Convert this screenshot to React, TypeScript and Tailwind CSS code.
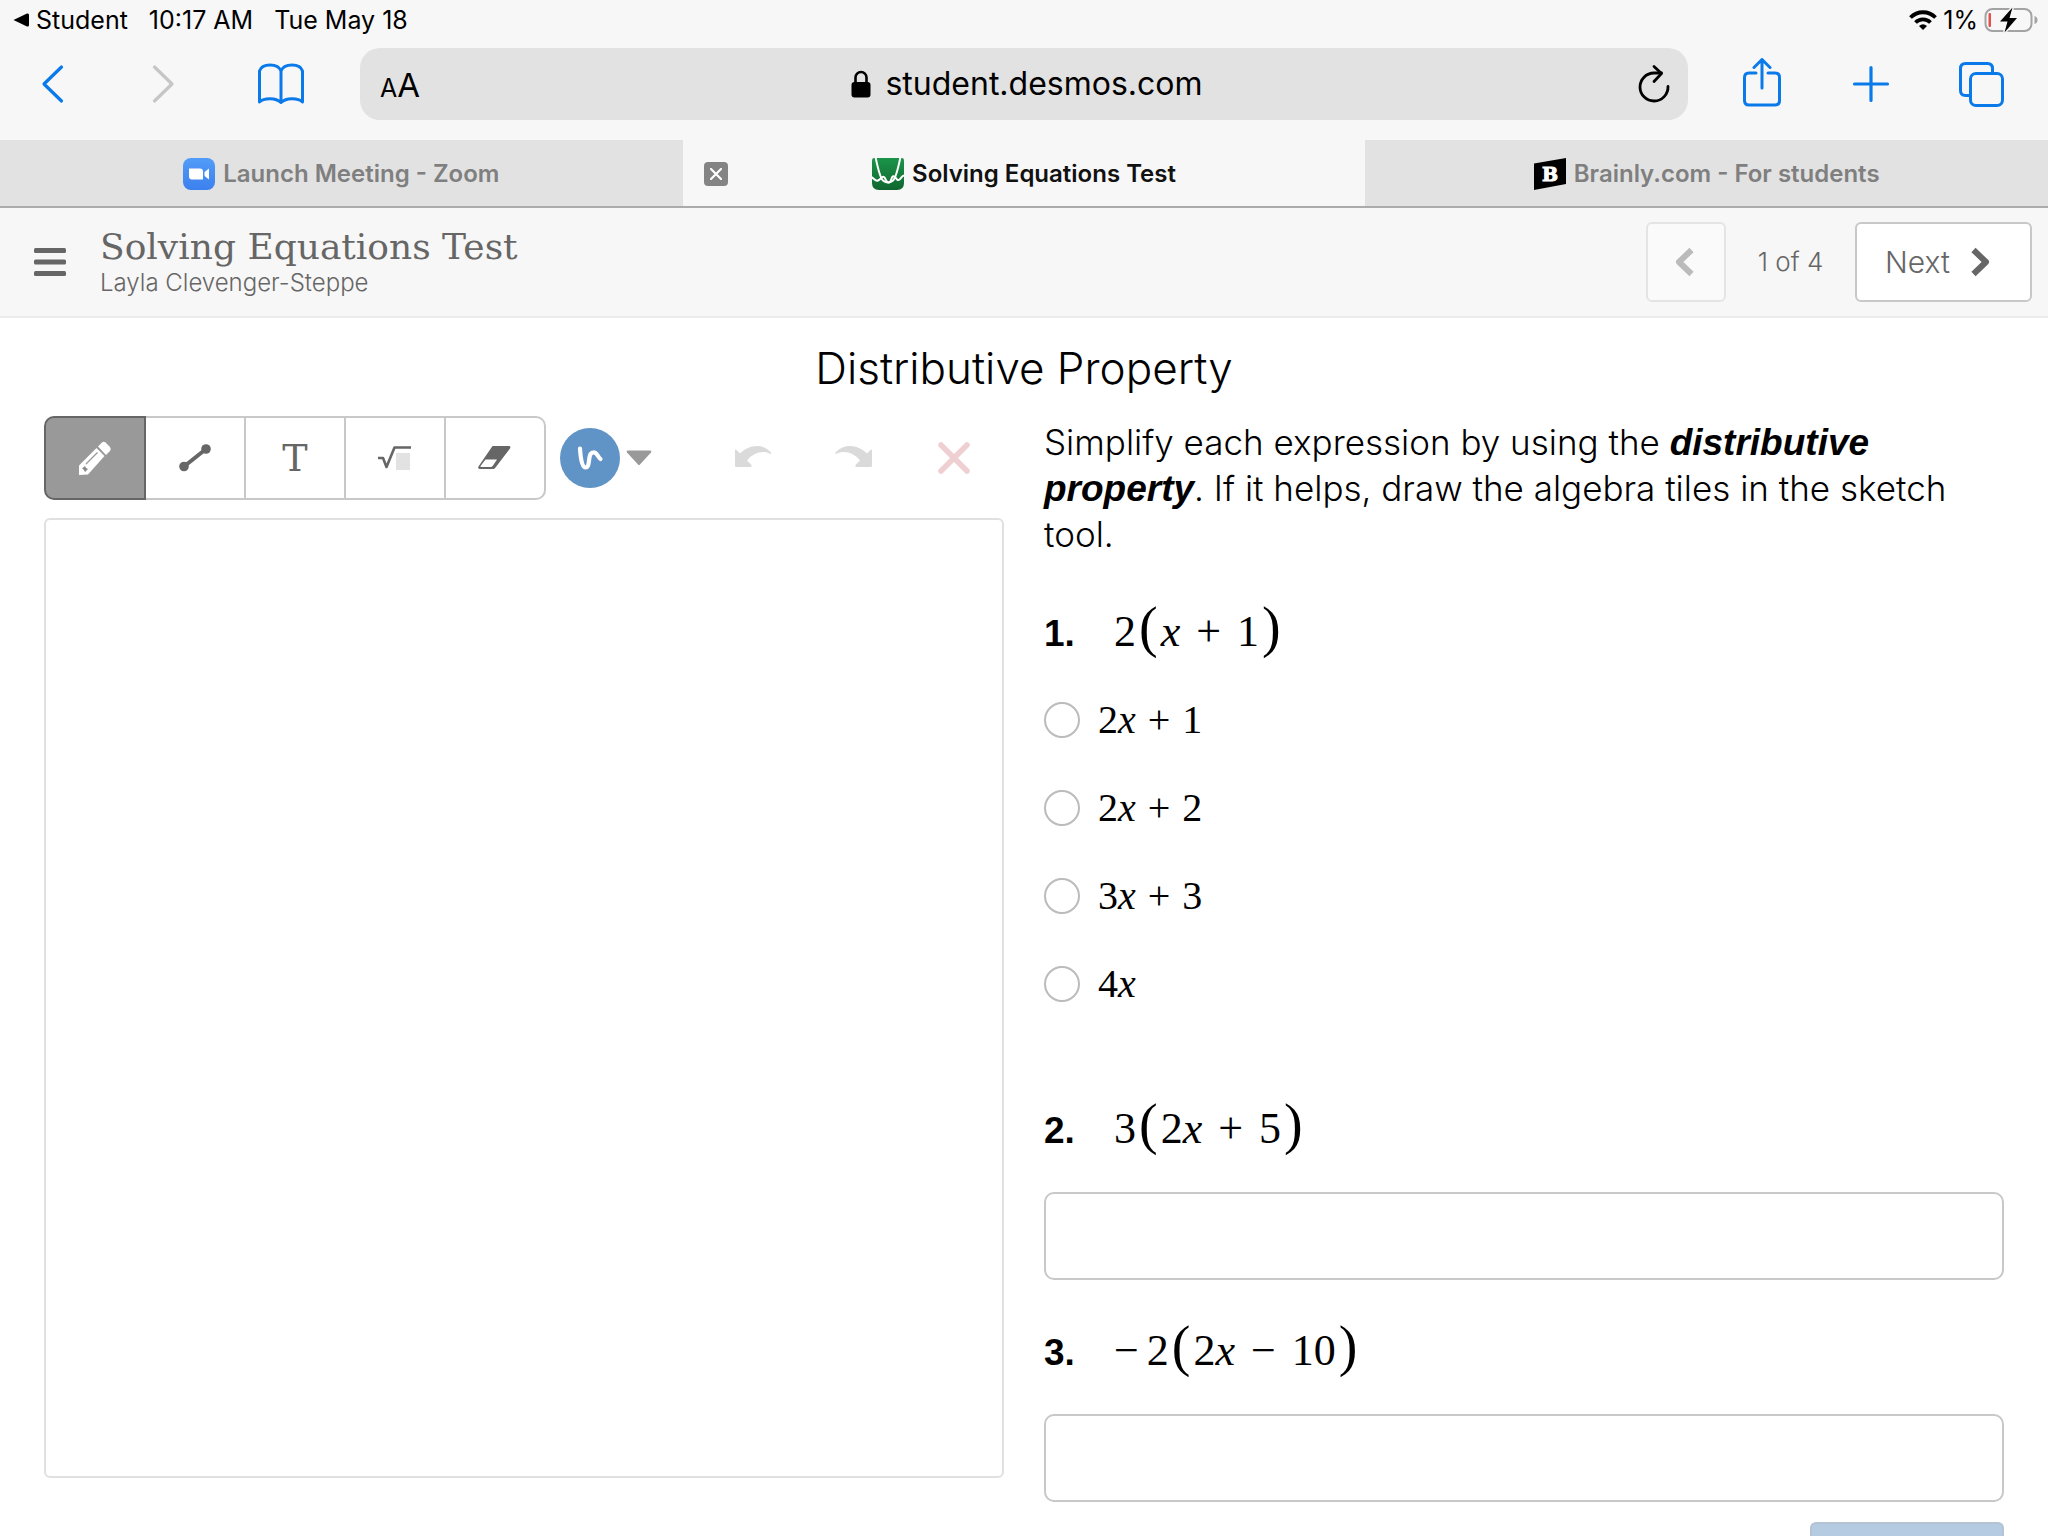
import { useState, type ReactNode } from 'react';

const TOOLS = ['Pencil', 'Line', 'Text', 'Math', 'Eraser'] as const;
type Tool = (typeof TOOLS)[number];

function ToolIcon({ tool }: { tool: Tool }) {
  switch (tool) {
    case 'Pencil':
      return (
        <svg width="40" height="40" viewBox="0 0 40 40" aria-hidden="true">
          <path d="M4 37V27.500L21.500 10L29.500 18L13 36.500Z" fill="currentColor" />
          <path d="M23 8.500L27 4.500Q28.500 3 30.500 4.500L35 9Q36.500 11 35 13L31 17Z" fill="currentColor" />
          <path d="M11 26L22.500 14.500" stroke="#999" strokeWidth="1.200" />
          <path d="M7 30.500L10 28L11 30L13 31L10 34Q9 31 7 30.500Z" fill="#8a8a8a" />
        </svg>
      );
    case 'Line':
      return (
        <svg width="40" height="40" viewBox="0 0 40 40" aria-hidden="true">
          <path d="M9 28.500L31 11" stroke="currentColor" strokeWidth="4" />
          <circle cx="9" cy="28.500" r="4.800" fill="currentColor" />
          <circle cx="31" cy="11" r="4.800" fill="currentColor" />
        </svg>
      );
    case 'Text':
      return <span className="font-['DejaVu_Serif','serif'] text-[38px] leading-10">T</span>;
    case 'Math':
      return (
        <svg width="40" height="40" viewBox="0 0 40 40" aria-hidden="true">
          <rect x="21" y="15" width="14" height="17" fill="#e2e2e2" />
          <path
            d="M3 20H8L11.500 29L19.500 9.500H36"
            fill="none"
            stroke="currentColor"
            strokeWidth="2.600"
            strokeLinejoin="round"
          />
        </svg>
      );
    case 'Eraser':
      return (
        <svg width="40" height="40" viewBox="0 0 40 40" aria-hidden="true">
          <path
            d="M17.500 8H34.500Q36 8.500 35 10.500L20.500 29.500Q19.500 31 18 31H4.500Q2.500 30.500 3.500 28.500Z"
            fill="currentColor"
          />
          <path d="M10.500 21.500H22L18 27.500Q17 29 15.500 29H6Q5 28.500 5.500 28Z" fill="#fff" />
        </svg>
      );
  }
}

function StatusBar() {
  return (
    <div className="flex h-10 items-center justify-between pl-3 pr-[10px] text-[25px] leading-10">
      <div className="flex items-center gap-[21px]">
        <a href="#student" className="flex items-center gap-1.5">
          <svg width="18" height="18" viewBox="0 0 18 18" aria-hidden="true">
            <path d="M1.500 9L15 2.500Q17 2 17 4V14Q17 16 15 15.500Z" />
          </svg>
          Student
        </a>
        <span>10:17 AM</span>
        <span>Tue May 18</span>
      </div>
      <div className="flex items-center gap-1.5">
        <svg width="28" height="22" viewBox="0 0 28 22" aria-hidden="true">
          <g fill="none" stroke="#000" strokeWidth="3.800">
            <path d="M1.500 8.500A17.500 17.500 0 0 1 26.500 8.500" />
            <path d="M6.500 13.500A10.500 10.500 0 0 1 21.500 13.500" />
          </g>
          <path d="M14 21L10 17Q14 13.500 18 17Z" />
        </svg>
        <span>1%</span>
        <svg width="54" height="26" viewBox="0 0 54 26" aria-hidden="true">
          <rect x="1.500" y="2" width="46" height="22" rx="7" fill="none" stroke="#a3a3a3" strokeWidth="2" />
          <path d="M50.500 9Q53.500 10 53.500 13Q53.500 16 50.500 17Z" fill="#a3a3a3" />
          <rect x="4.500" y="6" width="2.500" height="14" rx="1" fill="#e0524c" />
          <path
            d="M28.500 0.500L16 14.500H23.500L20.500 25.500L33 11H25.500Z"
            fill="#000"
            stroke="#f7f7f7"
            strokeWidth="3"
            paintOrder="stroke"
          />
        </svg>
      </div>
    </div>
  );
}

function BrowserBar() {
  return (
    <div className="flex h-[100px] items-start pt-2">
      <nav className="flex h-[72px] w-[360px] shrink-0 items-center text-[#0a7aea]">
        <button type="button" aria-label="Back" className="ml-10">
          <svg width="24" height="40" viewBox="0 0 24 40" fill="none" stroke="currentColor" strokeWidth="3.200">
            <path d="M21.500 3L4 20L21.500 37" strokeLinecap="round" strokeLinejoin="round" />
          </svg>
        </button>
        <button type="button" aria-label="Forward" className="ml-[88px] text-[#c6c6c8]">
          <svg width="24" height="40" viewBox="0 0 24 40" fill="none" stroke="currentColor" strokeWidth="3.200">
            <path d="M2.500 3L20 20L2.500 37" strokeLinecap="round" strokeLinejoin="round" />
          </svg>
        </button>
        <button type="button" aria-label="Bookmarks" className="ml-20">
          <svg width="50" height="44" viewBox="0 0 50 44" fill="none" stroke="currentColor" strokeWidth="3">
            <path
              d="M25 9C22 1 6 1 3.500 9V40C8 35.500 20 35.500 25 40.500C30 35.500 42 35.500 46.500 40V9C44 1 28 1 25 9V40"
              strokeLinejoin="round"
            />
          </svg>
        </button>
      </nav>

      <div className="flex h-[72px] min-w-0 flex-1 items-center justify-between rounded-[20px] bg-[#e2e2e2] pl-5 pr-[18px]">
        <button type="button" aria-label="Text size" className="flex w-9 items-baseline pt-1">
          <span className="text-[25px] leading-10">A</span>
          <span className="text-[33px] leading-10">A</span>
        </button>
        <div className="flex items-center gap-3.5 text-[32px] leading-10">
          <svg width="20" height="28" viewBox="0 0 20 28" aria-hidden="true">
            <rect x="0.500" y="12" width="19" height="15.500" rx="3" />
            <path d="M4.500 13V7.500A5.500 5.500 0 0 1 15.500 7.500V13" fill="none" stroke="#000" strokeWidth="2.600" />
          </svg>
          student.desmos.com
        </div>
        <button type="button" aria-label="Reload">
          <svg width="32" height="40" viewBox="0 0 32 40" fill="none" stroke="#000" strokeWidth="2.800">
            <path d="M30 22.500A14 14 0 1 1 16 9H23.500" strokeLinecap="round" />
            <path d="M16 2.500L23.500 9.500L16 17.500" strokeLinecap="round" strokeLinejoin="round" />
          </svg>
        </button>
      </div>

      <div className="flex h-[72px] w-[360px] shrink-0 items-center justify-end gap-[61px] pr-11 text-[#0a7aea]">
        <button type="button" aria-label="Share">
          <svg width="48" height="52" viewBox="0 2 48 52" fill="none" stroke="currentColor" strokeWidth="3">
            <path
              d="M18 17H11Q6.500 17 6.500 21.500V44.500Q6.500 49 11 49H37Q41.500 49 41.500 44.500V21.500Q41.500 17 37 17H30"
              strokeLinecap="round"
            />
            <path d="M24 32V3.500M16 11.500L24 3.500L32 11.500" strokeLinecap="round" strokeLinejoin="round" />
          </svg>
        </button>
        <button type="button" aria-label="New tab">
          <svg width="48" height="48" viewBox="0 0 48 48" stroke="currentColor" strokeWidth="3.200">
            <path d="M24 7.500V40.500M7.500 24H40.500" strokeLinecap="round" />
          </svg>
        </button>
        <button type="button" aria-label="Show tabs">
          <svg width="48" height="48" viewBox="0 0 48 48" fill="none" stroke="currentColor" strokeWidth="3">
            <rect x="14.500" y="13.500" width="32" height="32" rx="5.500" />
            <path d="M14 35.500H9.500Q4.500 35.500 4.500 30.500V8.500Q4.500 3.500 9.500 3.500H31.500Q36.500 3.500 36.500 8.500V13" />
          </svg>
        </button>
      </div>
    </div>
  );
}

function BrowserTab({ icon, title, active = false }: { icon: ReactNode; title: string; active?: boolean }) {
  return (
    <div
      className={
        active
          ? 'relative flex flex-1 items-center justify-center gap-2 bg-[#f7f7f7] pt-0.5 text-[#111]'
          : 'relative flex flex-1 items-center justify-center gap-2 bg-[#e2e2e2] pt-0.5 text-[#7f7f7f]'
      }
    >
      {active && (
        <button
          type="button"
          aria-label="Close tab"
          className="absolute left-[21px] flex h-6 w-6 items-center justify-center rounded bg-[#848484]"
        >
          <svg width="12" height="12" viewBox="0 0 12 12" stroke="#fff" strokeWidth="2.200">
            <path d="M1 1L11 11M11 1L1 11" strokeLinecap="round" />
          </svg>
        </button>
      )}
      {icon}
      <span className="text-[24px] font-semibold leading-8">{title}</span>
    </div>
  );
}

function TabStrip() {
  return (
    <div className="flex h-[68px] border-b-2 border-[#ababab]">
      <BrowserTab
        title="Launch Meeting - Zoom"
        icon={
          <svg width="32" height="32" viewBox="0 0 32 32" aria-hidden="true">
            <defs>
              <linearGradient id="zoom-bg" x1="0" y1="0" x2="0" y2="1">
                <stop offset="0" stopColor="#519cf8" />
                <stop offset="1" stopColor="#3c80ee" />
              </linearGradient>
            </defs>
            <rect width="32" height="32" rx="8" fill="url(#zoom-bg)" />
            <path d="M6 10.500H17Q20 10.500 20 13.500V21.500H9Q6 21.500 6 18.500Z" fill="#fff" />
            <path d="M21.500 14L26 10.500V21.500L21.500 18Z" fill="#fff" />
          </svg>
        }
      />
      <BrowserTab
        active
        title="Solving Equations Test"
        icon={
          <svg width="32" height="32" viewBox="0 0 32 32" aria-hidden="true">
            <defs>
              <linearGradient id="desmos-bg" x1="0" y1="0" x2="0" y2="1">
                <stop offset="0" stopColor="#1b9449" />
                <stop offset="1" stopColor="#10672f" />
              </linearGradient>
              <clipPath id="desmos-clip">
                <path d="M2 0H30Q32 0 32 3V25Q32 32 25 32H7Q0 32 0 25V3Q0 0 2 0Z" />
              </clipPath>
            </defs>
            <g clipPath="url(#desmos-clip)">
              <rect width="32" height="32" fill="url(#desmos-bg)" />
              <g fill="none" stroke="#fff" strokeWidth="2">
                <path d="M3.500 -1C6 11 8 20 11 22.500C14 25 18 25 21 22.500C24 20 26 11 28.500 -1" />
                <path d="M-1 19C2 20 3 23.500 6 22.500S10 17.500 12 19S14 25 17 24.500S19 17 22 18.500S25 23.500 27.500 21.500S30 17 33 17.500" />
              </g>
            </g>
          </svg>
        }
      />
      <BrowserTab
        title="Brainly.com - For students"
        icon={
          <svg width="32" height="32" viewBox="0 0 32 32" aria-hidden="true">
            <path d="M0 5.500L32 0V26L0 32Z" fill="#000" />
            <text
              x="16"
              y="23"
              textAnchor="middle"
              fill="#fff"
              stroke="#fff"
              strokeWidth="1"
              fontSize="19"
              fontWeight="700"
              fontFamily="DejaVu Serif, serif"
            >
              B
            </text>
          </svg>
        }
      />
    </div>
  );
}

function LessonHeader() {
  return (
    <header className="flex h-[110px] items-center border-b-2 border-[#ececec] bg-[#f7f7f7] pl-[34px] pr-4 font-light text-[#666]">
      <button type="button" aria-label="Menu" className="mr-[34px]">
        <svg width="32" height="28" viewBox="0 0 32 28" fill="currentColor">
          <rect width="32" height="5" rx="1.500" />
          <rect y="11.500" width="32" height="5" rx="1.500" />
          <rect y="23" width="32" height="5" rx="1.500" />
        </svg>
      </button>
      <div className="flex-1 pt-1.5">
        <h1 className="font-['DejaVu_Serif','serif'] text-[36px] leading-9">Solving Equations Test</h1>
        <p className="text-[24px] leading-9">Layla Clevenger-Steppe</p>
      </div>
      <button
        type="button"
        aria-label="Previous"
        disabled
        className="flex h-20 w-20 items-center justify-center rounded-md border-2 border-[#e4e4e4] bg-[#fafafa] text-[#bbb]"
      >
        <svg width="24" height="32" viewBox="0 0 24 32" fill="none" stroke="currentColor" strokeWidth="6">
          <path d="M17.500 4L5 16L17.500 28" strokeLinejoin="round" />
        </svg>
      </button>
      <span className="w-[129px] text-center text-[26px] leading-8">1 of 4</span>
      <button
        type="button"
        className="flex h-20 w-[177px] items-center gap-[18px] rounded-md border-2 border-[#c8c8c8] bg-white pl-7 text-[30px] leading-8"
      >
        Next
        <svg width="24" height="32" viewBox="0 0 24 32" fill="none" stroke="currentColor" strokeWidth="6" aria-hidden="true">
          <path d="M5.500 4L18 16L5.500 28" strokeLinejoin="round" />
        </svg>
      </button>
    </header>
  );
}

function SketchPad() {
  const [tool, setTool] = useState<Tool>('Pencil');

  return (
    <section aria-label="Sketch">
      <div className="flex h-[84px] items-center">
        <div className="flex h-[84px] rounded-[10px]">
          {TOOLS.map((name) => (
            <button
              key={name}
              type="button"
              aria-label={name}
              aria-pressed={tool === name}
              onClick={() => setTool(name)}
              className={
                tool === name
                  ? 'flex w-[102px] items-center justify-center border-2 border-[#666] bg-[#999] text-white first:rounded-l-[10px] last:rounded-r-[10px]'
                  : 'flex w-[100px] items-center justify-center border-y-2 border-r-2 border-[#c8c8c8] bg-white text-[#666] first:rounded-l-[10px] last:rounded-r-[10px]'
              }
            >
              <ToolIcon tool={name} />
            </button>
          ))}
        </div>
        <button type="button" aria-label="Stroke color" className="ml-3.5 flex items-center gap-1.5">
          <svg width="60" height="60" viewBox="0 0 60 60" aria-hidden="true">
            <circle cx="30" cy="30" r="30" fill="#6093c6" />
            <path
              d="M20 20.500C20.500 30 22 39.500 25.500 39.500C31 39.500 27 25 33 24.500C37 24 37.500 28.500 40.500 31"
              fill="none"
              stroke="#fff"
              strokeWidth="4.200"
              strokeLinecap="round"
            />
          </svg>
          <svg width="26" height="16" viewBox="0 0 26 16" aria-hidden="true">
            <path d="M1.500 0.500H24.500Q26 1 25 2.500L14 14.500Q13 15.500 12 14.500L1 2.500Q0 1 1.500 0.500Z" fill="#999" />
          </svg>
        </button>
        <button type="button" aria-label="Undo" disabled className="ml-20 text-[#dadada]">
          <svg width="40" height="28" viewBox="0 0 40 28" fill="currentColor">
            <path d="M3 6.500Q3 5 4.500 6L8 9.500C17 1 30 -1 38.500 8C40 9.500 39 10.500 37.500 9.500C30 6 21 9 15 16.500L19 20.500Q20.500 22.500 18.500 23H4.500Q3 23 3 21.500Z" />
          </svg>
        </button>
        <button type="button" aria-label="Redo" disabled className="ml-[61px] text-[#dadada]">
          <svg width="40" height="28" viewBox="0 0 40 28" fill="currentColor">
            <path d="M39 6.500Q39 5 37.500 6L34 9.500C25 1 12 -1 3 8C1.500 9.500 2.500 10.500 4 9.500C12 6 21 9 27 16.500L23 20.500Q21.500 22.500 23.500 23H37.500Q39 23 39 21.500Z" />
          </svg>
        </button>
        <button type="button" aria-label="Clear sketch" disabled className="ml-[61px] text-[#efcfd1]">
          <svg width="40" height="40" viewBox="0 0 40 40" stroke="currentColor" strokeWidth="5.500">
            <path d="M7 7L33 33M33 7L7 33" strokeLinecap="round" />
          </svg>
        </button>
      </div>
      <div className="mt-[18px] aspect-square w-full rounded-md border-2 border-[#e0e0e0] bg-white" />
    </section>
  );
}

function Var() {
  return <i>x</i>;
}

function Paren({ children }: { children: ReactNode }) {
  return <span className="mx-[3px] text-[56px]">{children}</span>;
}

function Op({ children }: { children: ReactNode }) {
  return <span className="mx-4">{children}</span>;
}

function Question({ number, children, htmlFor }: { number: number; children: ReactNode; htmlFor?: string }) {
  return (
    <label htmlFor={htmlFor} className="flex h-[60px] items-baseline leading-[52px]">
      <span className="w-[70px] font-['Liberation_Sans','sans-serif'] text-[37px] font-bold">{number}.</span>
      <span className="font-['Liberation_Serif','serif'] text-[44px]">{children}</span>
    </label>
  );
}

const CHOICES = [
  { value: 'a', label: <>2<Var /><span className="mx-3">+</span>1</> },
  { value: 'b', label: <>2<Var /><span className="mx-3">+</span>2</> },
  { value: 'c', label: <>3<Var /><span className="mx-3">+</span>3</> },
  { value: 'd', label: <>4<Var /></> },
];

const inputClass = 'mt-[34px] block h-[88px] w-full rounded-[10px] border-2 border-[#c8c8c8] bg-white px-5 text-[36px]';
const strongClass = "font-['Liberation_Sans','sans-serif'] text-[37px] font-bold italic leading-9";

function Questions() {
  const [choice, setChoice] = useState('');

  return (
    <form onSubmit={(e) => e.preventDefault()}>
      <p className="pt-[3px] text-[35px] font-light leading-[46px]">
        Simplify each expression by using the <strong className={strongClass}>distributive property</strong>. If it
        helps, draw the algebra tiles in the sketch tool.
      </p>

      <div className="mt-11">
        <Question number={1}>
          2<Paren>(</Paren><Var /><Op>+</Op>1<Paren>)</Paren>
        </Question>
      </div>
      <div role="radiogroup" aria-label="Question 1" className="mt-[15px]">
        {CHOICES.map(({ value, label }) => (
          <label key={value} className="flex h-[88px] items-center gap-[18px]">
            <input
              type="radio"
              name="question-1"
              value={value}
              checked={choice === value}
              onChange={() => setChoice(value)}
              className="h-9 w-9 appearance-none rounded-full border-2 border-[#bbb] bg-white checked:border-8 checked:border-[#6093c6]"
            />
            <span className="font-['Liberation_Serif','serif'] text-[40px] leading-[48px]">{label}</span>
          </label>
        ))}
      </div>

      <div className="mt-[70px]">
        <Question number={2} htmlFor="question-2">
          3<Paren>(</Paren>2<Var /><Op>+</Op>5<Paren>)</Paren>
        </Question>
        <input id="question-2" type="text" className={inputClass} />
      </div>

      <div className="mt-10">
        <Question number={3} htmlFor="question-3">
          <span className="mr-2">−</span>2<Paren>(</Paren>2<Var /><Op>−</Op>10<Paren>)</Paren>
        </Question>
        <input id="question-3" type="text" className={inputClass} />
      </div>

      <button
        type="submit"
        aria-label="Submit"
        className="ml-auto mt-5 block h-20 w-[194px] rounded-md border-2 border-[#b3c3d3] bg-[#b4cbe2]"
      />
    </form>
  );
}

export default function App() {
  return (
    <div className="h-screen overflow-hidden bg-white font-['Inter','sans-serif'] text-black">
      <div className="bg-[#f7f7f7]">
        <StatusBar />
        <BrowserBar />
        <TabStrip />
      </div>
      <LessonHeader />
      <main className="px-11">
        <h2 className="pb-[18px] pt-5 text-center text-[44px] font-light leading-[60px]">Distributive Property</h2>
        <div className="grid grid-cols-2 gap-10">
          <SketchPad />
          <Questions />
        </div>
      </main>
    </div>
  );
}
